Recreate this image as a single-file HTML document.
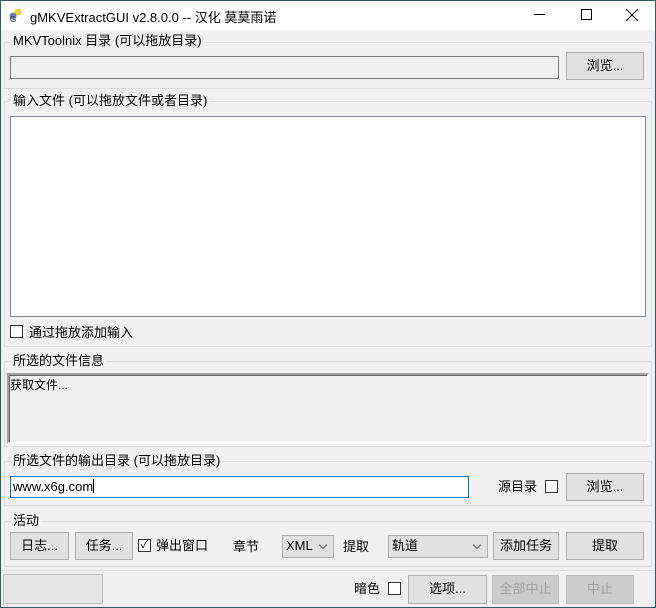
<!DOCTYPE html>
<html><head><meta charset="utf-8"><style>
*{box-sizing:border-box;margin:0;padding:0}
body{width:656px;height:608px;background:#f0f0f0;font-family:"Liberation Sans","Noto Sans CJK SC",sans-serif;font-size:13px;color:#000;position:relative;overflow:hidden}
.a{position:absolute;white-space:nowrap}
.title{left:0;top:0;width:656px;height:30px;background:#fff}
.grp{position:absolute;border:1px solid #dcdcdc}
.lbl{position:absolute;background:#f0f0f0;padding:0 2px;line-height:14px}
.btn{position:absolute;background:#e1e1e1;border:1px solid #adadad;text-align:center;line-height:25px}
.dis{color:#a0a0a0;background:#cccccc;border-color:#bfbfbf}
.cb{position:absolute;width:13px;height:13px;border:1px solid #333;background:#fff}
.sel{position:absolute;background:#e1e1e1;border:1px solid #adadad;line-height:20px;padding-left:3px}
.sel:after{content:"";position:absolute;right:7px;top:6px;width:5px;height:5px;border-right:1px solid #555;border-bottom:1px solid #555;transform:rotate(45deg)}
</style></head><body>
<div class="a title"></div>
<svg class="a" style="left:8px;top:7px" width="16" height="16"><circle cx="10" cy="5" r="3.5" fill="#e8d23a"/><circle cx="5" cy="9" r="3.5" fill="#6a7bb8"/><text x="2" y="15" font-size="8" fill="#333">G</text></svg>
<div class="a" style="left:30px;top:7px;font-size:13px">gMKVExtractGUI v2.8.0.0 -- 汉化 莫莫雨诺</div>
<div class="a" style="left:534px;top:14px;width:11px;height:1px;background:#000"></div>
<div class="a" style="left:581px;top:9px;width:11px;height:11px;border:1px solid #000"></div>
<svg class="a" style="left:626px;top:9px" width="12" height="12"><path d="M0 0L12 12M12 0L0 12" stroke="#000" stroke-width="1"/></svg>

<div class="grp" style="left:4px;top:42px;width:648px;height:47px"></div>
<div class="lbl" style="left:11px;top:34px">MKVToolnix 目录 (可以拖放目录)</div>
<div class="a" style="left:10px;top:56px;width:549px;height:23px;border:1px solid #7a7a7a;background:#f0f0f0"></div>
<div class="btn" style="left:566px;top:52px;width:78px;height:28px">浏览...</div>

<div class="grp" style="left:4px;top:101px;width:648px;height:246px"></div>
<div class="lbl" style="left:11px;top:94px">输入文件 (可以拖放文件或者目录)</div>
<div class="a" style="left:10px;top:116px;width:636px;height:201px;border:1px solid #828790;background:#fff"></div>
<div class="cb" style="left:10px;top:325px"></div>
<div class="a" style="left:29px;top:322px">通过拖放添加输入</div>

<div class="grp" style="left:4px;top:361px;width:648px;height:86px"></div>
<div class="lbl" style="left:11px;top:354px">所选的文件信息</div>
<div class="a" style="left:7px;top:373px;width:642px;height:71px;border:2px solid;border-color:#a0a0a0 #fff #fff #a0a0a0;background:#f0f0f0;box-shadow:inset 1px 1px 0 #696969"></div>
<div class="a" style="left:10px;top:376px;font-size:12px">获取文件...</div>

<div class="grp" style="left:4px;top:461px;width:648px;height:45px"></div>
<div class="lbl" style="left:11px;top:454px">所选文件的输出目录 (可以拖放目录)</div>
<div class="a" style="left:10px;top:476px;width:459px;height:22px;border:1px solid #0078d7;background:#fff;padding-left:2px;line-height:20px">www.x6g.com<span style="display:inline-block;width:1px;height:14px;background:#000;vertical-align:-2px"></span></div>
<div class="a" style="left:498px;top:476px">源目录</div>
<div class="cb" style="left:545px;top:480px"></div>
<div class="btn" style="left:566px;top:473px;width:78px;height:28px">浏览...</div>

<div class="grp" style="left:4px;top:521px;width:648px;height:46px"></div>
<div class="lbl" style="left:11px;top:514px">活动</div>
<div class="btn" style="left:10px;top:532px;width:59px;height:28px">日志...</div>
<div class="btn" style="left:75px;top:532px;width:58px;height:28px">任务...</div>
<div class="cb" style="left:138px;top:539px;font-size:11px;line-height:11px;text-align:center">✓</div>
<div class="a" style="left:156px;top:535px">弹出窗口</div>
<div class="a" style="left:233px;top:536px">章节</div>
<div class="sel" style="left:282px;top:535px;width:52px;height:23px">XML</div>
<div class="a" style="left:343px;top:536px">提取</div>
<div class="sel" style="left:388px;top:535px;width:100px;height:23px">轨道</div>
<div class="btn" style="left:493px;top:532px;width:66px;height:28px">添加任务</div>
<div class="btn" style="left:566px;top:532px;width:78px;height:28px">提取</div>

<div class="a" style="left:0;top:570px;width:656px;height:1px;background:#dcdcdc"></div>
<div class="a" style="left:3px;top:574px;width:100px;height:30px;border:1px solid #bfbfbf;background:#e6e6e6"></div>
<div class="a" style="left:354px;top:578px">暗色</div>
<div class="cb" style="left:388px;top:582px"></div>
<div class="btn" style="left:408px;top:575px;width:79px;height:29px">选项...</div>
<div class="btn dis" style="left:492px;top:575px;width:67px;height:29px">全部中止</div>
<div class="btn dis" style="left:566px;top:575px;width:68px;height:29px">中止</div>
<div class="a" style="left:0;top:0;width:656px;height:608px;border:1px solid #2f5d5b"></div>
</body></html>
